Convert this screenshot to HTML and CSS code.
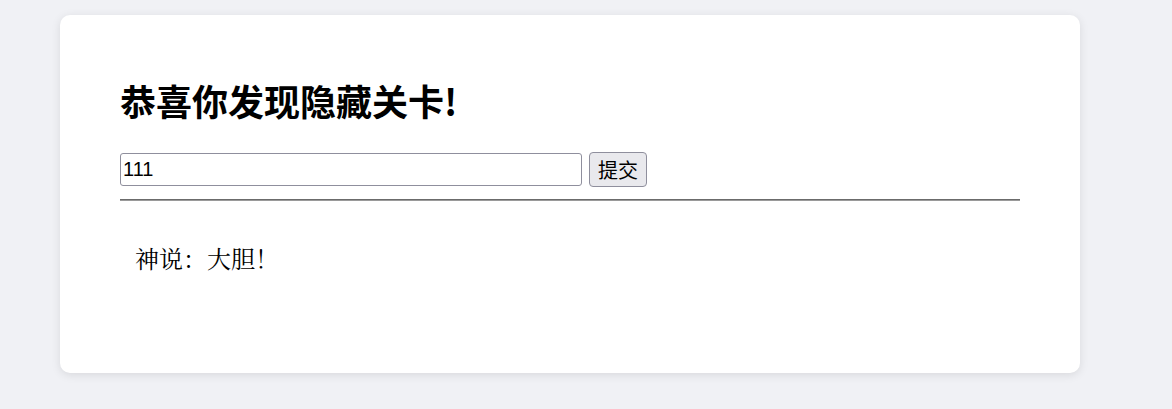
FILE: index.html
```html
<!DOCTYPE html>
<html lang="zh-CN">
<head>
<meta charset="utf-8">
<title>隐藏关卡</title>
<link rel="stylesheet" href="styles.css">
</head>
<body>
<div class="card">
  <h1 class="title">恭喜你发现隐藏关卡!</h1>
  <form class="form">
    <input class="field" type="text" value="111">
    <button class="btn" type="button">提交</button>
  </form>
  <hr class="rule">
  <p class="result">神说：大胆！</p>
</div>
</body>
</html>
```
FILE: styles.css
```css
html, body {
  margin: 0;
  padding: 0;
}
body {
  background: #f0f1f5;
  padding: 15px 60px;
  font-family: "Liberation Sans", "Noto Sans CJK SC", sans-serif;
}
.card {
  box-sizing: border-box;
  width: 1020px;
  height: 358px;
  background: #ffffff;
  border-radius: 10px;
  box-shadow: 0 2px 10px rgba(0, 0, 0, 0.1);
  padding: 60px;
}
.title {
  margin: 0;
  font-size: 36px;
  font-weight: 700;
  line-height: 50px;
  color: #000;
  font-family: "Noto Sans CJK SC", sans-serif;
}
.form {
  display: flex;
  align-items: center;
  gap: 7px;
  margin-top: 27px;
}
.field {
  box-sizing: border-box;
  width: 462px;
  height: 33px;
  font-family: "Liberation Sans", "Noto Sans CJK SC", sans-serif;
  font-size: 20px;
  padding: 1px 2px;
  border: 1px solid #8f8f9d;
  border-radius: 3px;
  color: #000;
}
.btn {
  box-sizing: border-box;
  height: 35px;
  width: 58px;
  padding: 0;
  font-family: "Noto Sans CJK SC", sans-serif;
  font-size: 20px;
  background: #e9e9ed;
  border: 1px solid #8f8f9d;
  border-radius: 4px;
  color: #000;
}
.rule {
  margin: 12px 0 0;
  border: 0;
  border-top: 1px solid #6b6b6b;
  border-bottom: 1px solid #9a9a9a;
  height: 0;
}
.result {
  margin: 42px 0 0;
  padding-left: 15px;
  font-size: 24px;
  line-height: 30px;
  font-family: "Noto Serif CJK SC", serif;
  color: #000;
}
```
